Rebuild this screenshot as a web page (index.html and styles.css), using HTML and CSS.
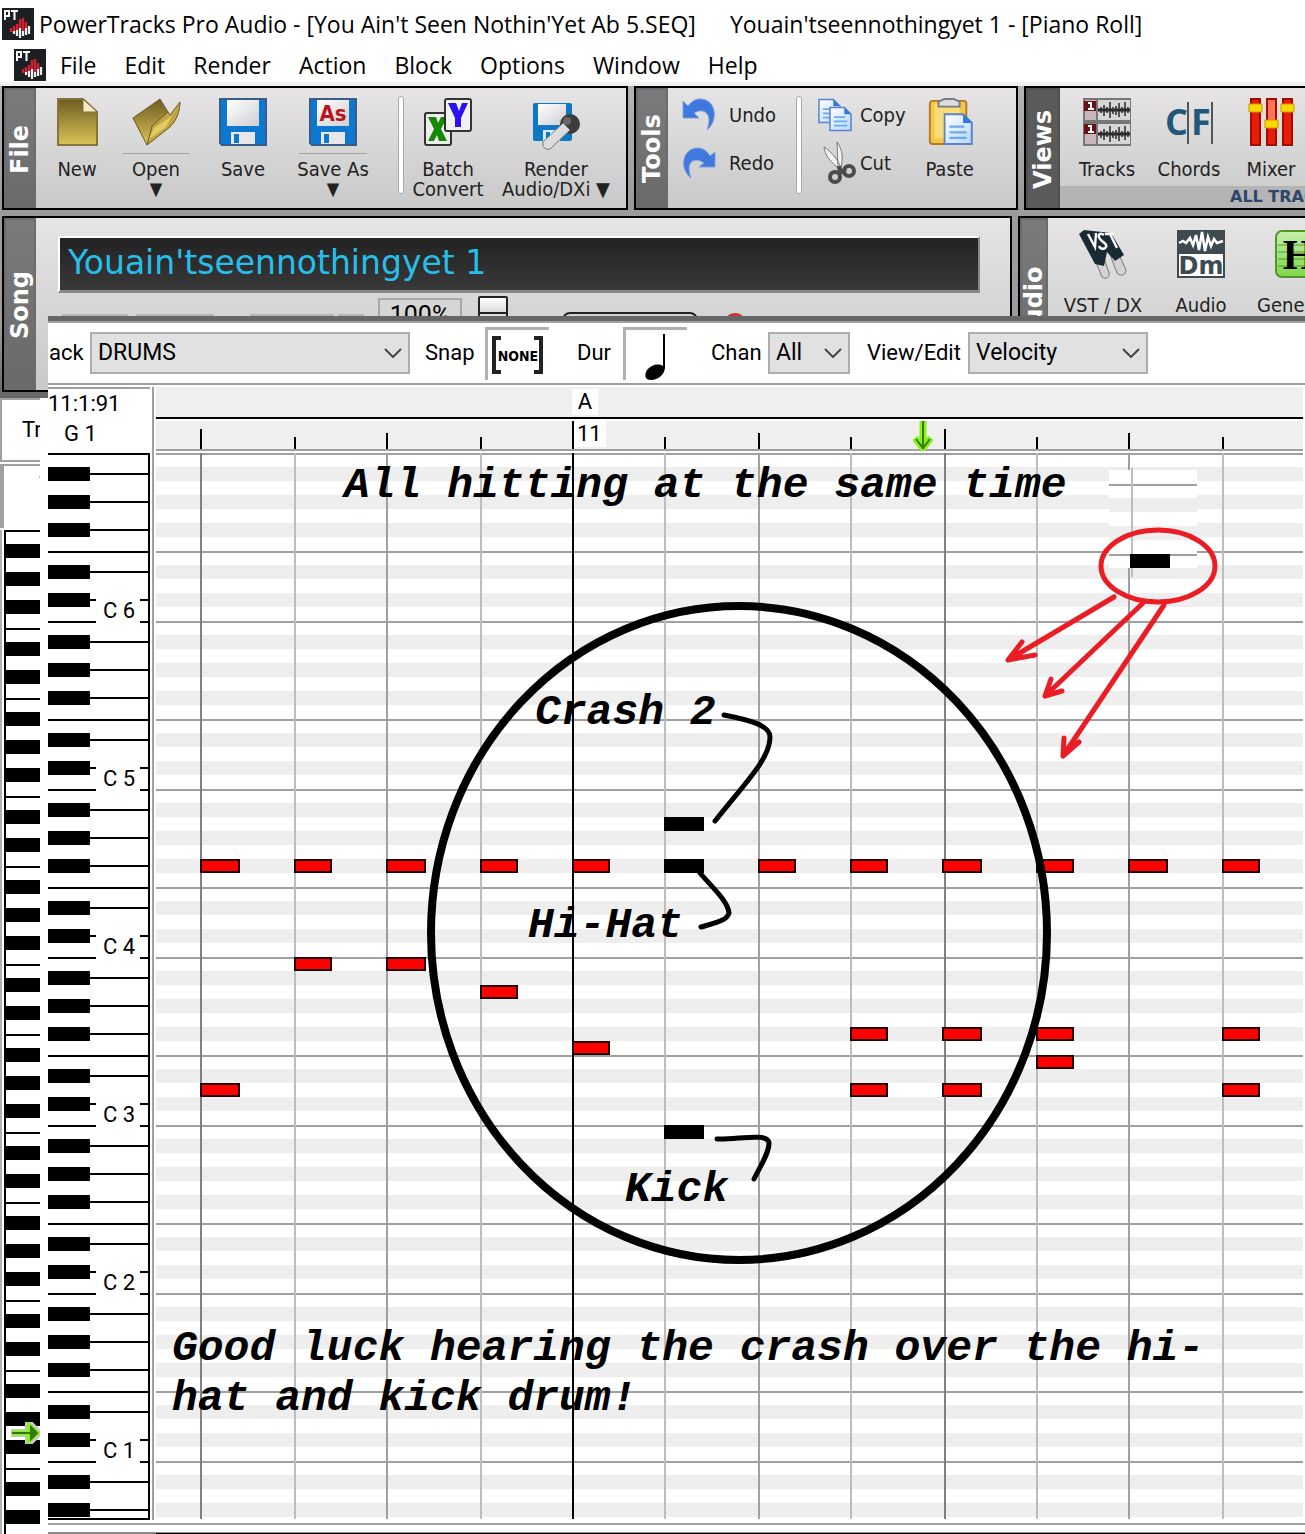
FILE: index.html
```html
<!DOCTYPE html>
<html lang="en">
<head>
<meta charset="utf-8">
<title>PowerTracks Pro Audio</title>
<link rel="stylesheet" href="styles.css">
</head>
<body>
<svg class="defs" aria-hidden="true">
  <defs>
    <linearGradient id="gold" x1="0" y1="0" x2="0" y2="1"><stop offset="0" stop-color="#6d5b20"/><stop offset="1" stop-color="#dcc558"/></linearGradient>
    <linearGradient id="paper" x1="0" y1="0" x2="1" y2="1"><stop offset="0" stop-color="#fff"/><stop offset="1" stop-color="#cfcfd2"/></linearGradient>
    <linearGradient id="sheet" x1="0" y1="0" x2="1" y2="1"><stop offset="0" stop-color="#fff"/><stop offset="1" stop-color="#b5d7ff"/></linearGradient>
    <linearGradient id="green" x1="0" y1="0" x2="0" y2="1"><stop offset="0" stop-color="#c5efab"/><stop offset="1" stop-color="#7ed64a"/></linearGradient>
    <symbol id="logo" viewBox="0 0 32 32">
      <rect width="32" height="32" fill="#1d2023"/>
      <path d="M3 12V3h4v5H3M9 3h7M12.500 3v9" fill="none" stroke="#fff" stroke-width="2"/>
      <path d="M9 20v4M12 18v6M15 16v8M18 11v12M21 10v13M24 14v9M27 18v4" stroke="#d3202e" stroke-width="2.400"/>
      <path d="M12 23v3M15 22v6M18 20v10M21 23v5M24 20v7M27 18v8" stroke="#eee" stroke-width="2.200"/>
    </symbol>
    <symbol id="disk" viewBox="0 0 48 48">
      <path d="M1 1h46v46H3l-2-2z" fill="#0d78cf" stroke="#3a5c86" stroke-width="2"/>
      <path d="M8 2h32v26H8z" fill="url(#paper)"/>
      <path d="M12 34h24v12H12z" fill="#e8e8ea"/>
      <path d="M15 36h5v9h-5z" fill="#0d78cf"/>
    </symbol>
    <symbol id="page" viewBox="0 0 24 26">
      <path d="M1 1h15l7 7v17H1z" fill="url(#sheet)" stroke="#5c83c9" stroke-width="1.600"/>
      <path d="M16 1v7h7z" fill="#2f78d8"/>
      <path d="M5 11h12M5 15.500h14M5 20h14" stroke="#6eaaf0" stroke-width="1.800"/>
    </symbol>
  </defs>
</svg>

<header class="titlebar">
  <svg class="logo"><use href="#logo"/></svg>
  <span class="app-title">PowerTracks Pro Audio - [You Ain't Seen Nothin'Yet Ab 5.SEQ]</span>
  <span class="doc-title">Youain'tseennothingyet 1 - [Piano Roll]</span>
</header>

<nav class="menubar">
  <svg class="logo"><use href="#logo"/></svg>
  <a href="#file">File</a><a href="#edit">Edit</a><a href="#render">Render</a><a href="#action">Action</a><a href="#block">Block</a><a href="#options">Options</a><a href="#window">Window</a><a href="#help">Help</a>
</nav>

<div class="toolbar">
  <section class="panel file-panel">
    <h2 class="tab">File</h2>
    <div class="tools">
      <button class="tool new"><svg class="icon" viewBox="0 0 48 48"><path d="M5 1h25l14 13v33H5z" fill="url(#gold)" stroke="#857340" stroke-width="2"/><path d="M30 1v13h14z" fill="#f4edc4" stroke="#857340"/></svg><span>New</span></button>
      <button class="tool open"><svg class="icon" viewBox="0 0 48 48"><path d="M1 20 28 1l8 13-21 33z" fill="url(#gold)" stroke="#6b5a27"/><path d="M15 47 20 28 36 14l2 3 10-13c0 10-4 19-10 25z" fill="#bfa544" stroke="#6b5a27"/><path d="M17 41 22 30 40 18 34 29z" fill="#e2cb63"/></svg><span class="ruled">Open</span><i>▼</i></button>
      <button class="tool save"><svg class="icon"><use href="#disk"/></svg><span>Save</span></button>
      <button class="tool save-as"><svg class="icon" viewBox="0 0 48 48"><use href="#disk"/><text x="24" y="23" class="as">As</text></svg><span class="ruled">Save As</span><i>▼</i></button>
      <hr>
      <button class="tool batch"><svg class="icon" viewBox="0 0 48 48"><rect x="1" y="15" width="26" height="32" rx="2" fill="#eee" stroke="#333" stroke-width="2"/><path d="M4 19h8l2 6 3-6h6l-6 12 6 12h-8l-2-6-3 6H4l6-12z" fill="#148a08"/><rect x="21" y="1" width="26" height="32" rx="2" fill="#f2f2f2" stroke="#333" stroke-width="2"/><path d="M24 5h8l3 8 3-8h6l-7 15v9h-6V20z" fill="#2a12f5"/></svg><span>Batch</span><span>Convert</span></button>
      <button class="tool render"><svg class="icon" viewBox="0 0 48 48"><rect x="1" y="5" width="39" height="38" rx="2" fill="#0f78c2"/><path d="M6 6h28v21H6z" fill="url(#paper)"/><path d="M11 32h17v11H11z" fill="#d9e9f5"/><path d="M14 34h4v9h-4z" fill="#0f78c2"/><circle cx="38" cy="26" r="10" fill="#3c3c3c"/><circle cx="35" cy="23" r="4" fill="#666"/><path d="m31 25 7 7-20 19c-5 1-8-2-7-7z" fill="#ddd" stroke="#777"/></svg><span>Render</span><span>Audio/DXi ▼</span></button>
    </div>
  </section>
  <section class="panel tools-panel">
    <h2 class="tab">Tools</h2>
    <div class="tools">
      <div class="pair">
        <button class="mini"><svg viewBox="0 0 34 34"><path d="M1 3v17h16l-5-5c8-5 15-1 15 7 0 4-1 7-2 10C37 22 34 1 18 1 13 1 9 4 6 8z" fill="#3f78df" stroke="#7c9fdc"/></svg>Undo</button>
        <button class="mini"><svg viewBox="0 0 34 34"><path d="M33 6v15H17l5-4c-8-6-15-2-15 5 0 4 1 7 2 10C-3 23 0 2 16 2c5 0 9 3 12 8z" fill="#3f78df" stroke="#7c9fdc"/></svg>Redo</button>
      </div>
      <hr>
      <div class="pair edit">
        <button class="mini"><svg viewBox="0 0 34 34"><use href="#page" width="23" height="26"/><use href="#page" x="11" y="8" width="23" height="26"/></svg>Copy</button>
        <button class="mini"><svg viewBox="0 0 34 42"><path d="M15 0c6 8 6 17 4 26h-3zM2 5c9 6 14 13 18 23l-4-2C7 18 3 13 2 5z" fill="#f2f2f2" stroke="#777"/><g fill="none" stroke="#4b4b4b" stroke-width="4"><circle cx="13" cy="35" r="5"/><circle cx="27" cy="29" r="5"/><path d="m17 24 1 7 6-4"/></g></svg>Cut</button>
      </div>
      <button class="tool paste"><svg class="icon" viewBox="0 0 48 50"><rect x="3" y="3" width="38" height="45" rx="3" fill="#f3c84a" stroke="#b47b1e" stroke-width="2"/><path d="M8 6h26v36H8z" fill="#f9dc78"/><path d="M12 9V4l6-3h10l6 3v5z" fill="#ddd" stroke="#767b87" stroke-width="2"/><use href="#page" x="17" y="15" width="31" height="35"/></svg><span>Paste</span></button>
    </div>
  </section>
  <section class="panel views-panel">
    <h2 class="tab dark">Views</h2>
    <div class="views">
      <div class="tools">
        <button class="tool"><svg class="icon" viewBox="0 0 48 48"><rect width="48" height="48" fill="#777"/><path d="M2 2h11v20H2zM2 26h11v20H2z" fill="#c9b5b7"/><path d="M1 3h12v10H1zM1 26h12v10H1z" fill="#681218"/><path d="M5 5h3v6M5 11h6M5 28h3v6M5 34h6" fill="none" stroke="#fff" stroke-width="2"/><path d="M15 2h32v20H15zM15 26h32v20H15z" fill="#d6d6d6"/><path d="M15 12h32M15 36h32" stroke="#222" stroke-width="3"/><path d="M18 9v6M21 7v11M24 9v6M27 4v16M30 9v7M33 8v9M36 5v14M39 9v6M42 4v14M45 9v6M18 33v7M21 31v11M24 33v6M27 28v16M30 33v7M33 32v9M36 29v14M39 33v6M42 28v14M45 33v6" stroke="#333" stroke-width="1.600"/></svg><span>Tracks</span></button>
        <button class="tool"><svg class="icon" viewBox="0 0 48 48"><text x="0" y="37" class="chord">C</text><text x="26" y="37" class="chord">F</text><path d="M23 4v42M47 4v42" stroke="#555" stroke-width="2"/></svg><span>Chords</span></button>
        <button class="tool"><svg class="icon" viewBox="0 0 48 48"><path d="M4 1h9v46H4zM20 1h9v46h-9zM36 1h9v46h-9z" fill="#e91c05" stroke="#a30c00" stroke-width="2"/><path d="M21 2h7v20h-7z" fill="#ff7358"/><path d="M2 6h13v8H2zM18 22h13v8H18zM34 6h13v8H34z" fill="#ffd800" stroke="#ca9600"/></svg><span>Mixer</span></button>
      </div>
      <p class="all-tracks">ALL TRACKS</p>
    </div>
  </section>
</div>

<main class="desk">
  <div class="behind">
    <div class="toolbar second">
      <section class="panel song-panel">
        <h2 class="tab">Song</h2>
        <div class="song">
          <input class="song-title" aria-label="Song title" value="Youain'tseennothingyet 1">
          <div class="transport">
            <b></b><b class="w78"></b><b class="w84"></b><b class="w26"></b>
            <output>100%</output>
            <button class="step" aria-label="Decrease tempo"></button>
            <span class="pill"></span><span class="rec"></span>
          </div>
        </div>
      </section>
      <section class="panel audio-panel">
        <h2 class="tab">Audio</h2>
        <div class="tools">
          <button class="tool"><svg class="icon" viewBox="0 0 48 48"><path d="m16 30 7 17c4 3 8 0 7-4l-6-18zM30 22l8 21c4 4 9 2 9-3l-9-20z" fill="#d5d2d5" stroke="#777"/><path d="M0 4 5 0l27 3 13 22-9 6-8-9-3 14-9-2z" fill="#182b34"/><path d="m9 4 7 13L17 3M25 5c-4-3-7 0-4 4s8 5 6 8-6 2-7-1M26 4h9m-4 0 7 14" fill="none" stroke="#fff" stroke-width="2.400"/></svg><span>VST / DX</span></button>
          <button class="tool"><svg class="icon" viewBox="0 0 48 48"><rect width="48" height="48" fill="#3d4a50"/><path d="m2 13 4-2 3 2 4-5 3 7 3-10 3 15L25 2l3 19 3-14 3 9 3-7 3 4 6-2" fill="none" stroke="#fff" stroke-width="2.500"/><path d="M2 24h44v22H2z" fill="#fff"/><text x="24" y="44" class="dm">Dm</text></svg><span>Audio</span></button>
          <button class="tool"><svg class="icon" viewBox="0 0 48 48"><rect x="1" y="1" width="46" height="46" rx="6" fill="url(#green)" stroke="#54942f" stroke-width="2"/><path d="M3 15h42M3 22h42M3 29h42M3 36h42" stroke="#4c9c22"/><text x="24" y="39" class="gen">H</text></svg><span>Generate</span></button>
        </div>
      </section>
    </div>
    <aside class="tracks">
      <div class="tracks-head">Tr</div>
      <div class="tracks-body">.</div>
      <div class="mini-keys"><svg class="key-arrow" viewBox="0 0 30 22"><path d="M1 11h27M19 2l9 9-9 9z" fill="#8af01c" stroke="#c8c8c8" stroke-width="8"/><path d="M2 11h24M19 4l8 7-8 7z" fill="#8af01c" stroke="#8af01c" stroke-width="5"/><path d="M2 11h22M21 5l6 6-6 6z" fill="#347900" stroke="#347900" stroke-width="2"/></svg></div>
    </aside>
  </div>

  <section class="piano-roll">
    <form class="roll-bar">
      <label for="track" class="track-label">ack</label>
      <span class="pick track"><select id="track"><option>DRUMS</option></select><svg viewBox="0 0 18 10"><path d="m1 1 8 8 8-8"/></svg></span>
      <label for="snap" class="snap-label">Snap</label>
      <button type="button" id="snap" class="well" aria-label="Snap none"><svg viewBox="0 0 60 50"><path d="M13 8H6v34h7M46 8h7v34h-7" fill="none" stroke="#222" stroke-width="4"/><text x="30" y="31" class="none">NONE</text></svg></button>
      <label for="dur" class="dur-label">Dur</label>
      <button type="button" id="dur" class="well" aria-label="Quarter note"><svg viewBox="0 0 60 50"><path d="M37 4h2v34c-1 8-8 12-14 12-6 0-7-5-4-10 4-5 11-7 16-4z"/></svg></button>
      <label for="chan" class="chan-label">Chan</label>
      <span class="pick chan"><select id="chan"><option>All</option></select><svg viewBox="0 0 18 10"><path d="m1 1 8 8 8-8"/></svg></span>
      <label for="view" class="view-label">View/Edit</label>
      <span class="pick view"><select id="view"><option>Velocity</option></select><svg viewBox="0 0 18 10"><path d="m1 1 8 8 8-8"/></svg></span>
    </form>
    <div class="roll">
      <div class="position"><span>11:1:91</span><span class="pitch">G 1</span></div>
      <div class="keyboard"><span>C 6</span><span>C 5</span><span>C 4</span><span>C 3</span><span>C 2</span><span>C 1</span></div>
      <div class="ruler">
        <div class="markers"><span>A</span></div>
        <div class="bars">
          <svg width="1149" height="34"><path d="M45 8v20M789 8v20M231 12v16M603 12v16M973 12v16M139 16v12M325 16v12M509 16v12M695 16v12M881 16v12M1067 16v12M417-2v30" stroke="#000" stroke-width="2"/></svg>
          <span class="bar-no">11</span>
          <svg class="playhead" viewBox="0 0 20 30"><path d="M10 0v22M2 17l8 10 8-10" fill="none" stroke="#8af01c" stroke-width="7"/><path d="M10 0v28M3 18l7 9 7-9" fill="none" stroke="#357d00" stroke-width="2"/></svg>
        </div>
      </div>
      <div class="grid">
        <svg class="notes" width="1149" height="1066" viewBox="156 453 1149 1066">
          <g fill="none" stroke-width="2">
            <path d="M295 453v1066M481 453v1066M665 453v1066M851 453v1066M1037 453v1066M1223 453v1066" stroke="#bdbdbd"/>
            <path d="M387 453v1066M759 453v1066M1129 453v1066" stroke="#a0a0a0"/>
            <path d="M201 453v1066M945 453v1066" stroke="#808080"/>
            <path d="M573 453v1066" stroke="#000"/>
          </g>
          <g fill="#f00" stroke="#200" stroke-width="2">
            <path d="M201 860h38v12h-38zM295 860h36v12h-36zM387 860h38v12h-38zM481 860h36v12h-36zM573 860h36v12h-36zM759 860h36v12h-36zM851 860h36v12h-36zM943 860h38v12h-38zM1037 860h36v12h-36zM1129 860h38v12h-38zM1223 860h36v12h-36z"/>
            <path d="M295 958h36v12h-36zM387 958h38v12h-38zM481 986h36v12h-36zM573 1042h36v12h-36z"/>
            <path d="M851 1028h36v12h-36zM943 1028h38v12h-38zM1037 1028h36v12h-36zM1223 1028h36v12h-36zM1037 1056h36v12h-36z"/>
            <path d="M201 1084h38v12h-38zM851 1084h36v12h-36zM943 1084h38v12h-38zM1223 1084h36v12h-36z"/>
          </g>
          <path d="M1109 470h88v98h-88z" fill="#fff"/>
          <path d="M1109 498h88v14h-88zM1109 526h88v14h-88z" fill="#eee"/>
          <path d="M1109 485h88M1109 555h88" stroke="#a0a0a0" stroke-width="2"/>
          <path d="M1132 468v109" stroke="#bdbdbd" stroke-width="2"/>
          <path d="M664 817h40v14h-40zM664 859h40v14h-40zM664 1125h40v14h-40zM1130 554h40v14h-40z"/>
          <g fill="none" stroke="#000" stroke-linecap="round" stroke-linejoin="round">
            <ellipse cx="739" cy="933" rx="308" ry="327" stroke-width="8"/>
            <path d="M724 715c25 5 46 10 46 22 0 22-25 46-55 84M700 873c11 13 28 28 29 40-2 8-15 10-28 14M717 1139c20 1 51-7 52 4 0 10-8 22-15 36" stroke-width="5"/>
          </g>
          <g fill="none" stroke="#ea1c24" stroke-width="5" stroke-linecap="round" stroke-linejoin="round">
            <ellipse cx="1158" cy="566" rx="57" ry="36"/>
            <path d="M1114 597 1008 660M1022 642l-14 18 27-5M1143 603l-98 93M1051 679l-6 17 17-5M1164 605l-101 151M1064 738l-1 18 16-14"/>
          </g>
        </svg>
        <p class="note-text all">All hitting at the same time</p>
        <p class="note-text crash">Crash 2</p>
        <p class="note-text hat">Hi-Hat</p>
        <p class="note-text kick">Kick</p>
        <p class="note-text luck">Good luck hearing the crash over the hi-<br>hat and kick drum!</p>
      </div>
    </div>
    <footer class="roll-foot"></footer>
  </section>
</main>
</body>
</html>
```

FILE: styles.css
```css
* { box-sizing: border-box; }
body {
  margin: 0;
  min-height: 100vh;
  overflow-x: hidden;
  background: #fff;
  color: #000;
  font-family: "Open Sans", "Noto Sans", sans-serif;
}
h2, p { margin: 0; }
button { padding: 0; border: 0; background: none; color: inherit; font: inherit; }
svg { display: block; flex: none; }
.defs { position: absolute; width: 0; height: 0; }

/* Title and menus */
.titlebar { display: flex; align-items: center; height: 46px; padding: 2px 2px 0; font-size: 23px; white-space: nowrap; }
.logo { width: 32px; height: 32px; }
.app-title { margin-left: 5px; }
.doc-title { margin-left: 34px; }
.menubar { display: flex; align-items: center; gap: 28px; height: 40px; padding: 2px 14px 0; border-bottom: 4px solid #f0f0f0; font-size: 23px; }
.menubar .logo { margin-right: -14px; }
.menubar a { color: #000; text-decoration: none; }

/* Tool panels */
.toolbar { display: flex; gap: 6px; height: 124px; padding-left: 2px; background: linear-gradient(#b4b4b4, #999); color: #222; font-family: "DejaVu Sans Condensed", "DejaVu Sans", sans-serif; font-size: 20px; line-height: 20px; }
.panel { display: flex; flex: none; border: 2px solid #000; background: linear-gradient(#e6e4e5, #c9c9c9); overflow: hidden; }
.tab { display: flex; align-items: center; justify-content: center; flex: none; width: 32px; border: 2px solid #6c6c6e; border-top: 0; background: linear-gradient(#696969, #7b7b7d); color: #fff; font: bold 24px/28px "DejaVu Sans", sans-serif; writing-mode: vertical-rl; transform: rotate(180deg); }
.tab.dark { width: 34px; background: #5a5a5a; border-color: #505050; }
.tools { display: flex; flex: 1; padding-top: 10px; }
.tool { display: flex; flex-direction: column; align-items: center; flex: none; width: 82px; white-space: nowrap; }
.tool .icon { width: 48px; height: 48px; margin-bottom: 13px; overflow: visible; }
.tool i { font-style: normal; font-size: 18px; }
.tool .ruled { position: relative; }
.ruled::before { content: ""; position: absolute; top: -6px; left: 50%; width: 68px; margin-left: -34px; border-top: 1px solid #a5a5a8; }
.file-panel { width: 626px; }
.open { width: 76px; }
.save { width: 98px; }
.save-as { width: 82px; }
.batch { width: 88px; }
.render { width: 128px; }
.toolbar hr { flex: none; width: 6px; height: 98px; margin: -2px 0 0 24px; border: 1px solid #aaa; border-radius: 3px; background: #fff; }
.as { font: bold 22px "DejaVu Sans Condensed", sans-serif; fill: #b81420; text-anchor: middle; }

.tools-panel { width: 384px; }
.pair { display: flex; flex-direction: column; gap: 14px; padding-left: 14px; }
.mini { display: flex; align-items: center; gap: 13px; height: 34px; }
.mini svg { width: 34px; height: 34px; }
.tools-panel hr { margin-left: 20px; }
.edit { padding-left: 16px; }
.edit .mini { gap: 8px; }
.edit .mini + .mini svg { height: 42px; margin-left: 4px; }
.edit .mini + .mini { gap: 4px; }
.paste { width: 88px; }

.views-panel, .audio-panel { flex: 1; min-width: 0; border-right: 0; }
.views { display: flex; flex: 1; flex-direction: column; min-width: 0; padding-left: 6px; }
.all-tracks { margin-left: -6px; padding-left: 170px; background: #b4b4b4; color: #2d4669; font: bold 16px/22px "DejaVu Sans", sans-serif; white-space: nowrap; }
.chord { font: bold 36px "Liberation Sans Narrow", "Open Sans", sans-serif; fill: #1f5878; }

/* Song bar and audio panel, partly covered by the roll window */
.desk { display: grid; grid-template-columns: 48px minmax(0, 1fr); grid-template-rows: 106px auto; }
.behind { grid-area: 1 / 1 / 3 / 3; display: flex; flex-direction: column; min-width: 0; }
.second { flex: none; height: 188px; padding-top: 6px; padding-bottom: 6px; background: linear-gradient(#9c9c9c 60%, #666); }
.song-panel { width: 1010px; }
.song { flex: 1; padding: 18px 30px 0 22px; }
.song-title { display: block; width: 100%; height: 57px; padding: 0 8px 4px; border: 2px solid #888; border-top-color: #fff; border-left-color: #fff; border-bottom-width: 3px; background: linear-gradient(#222, #393939); color: #27bfe9; font: 33px "DejaVu Sans", sans-serif; }
.transport { display: flex; align-items: flex-start; padding: 3px 0 0 4px; }
.transport b { width: 66px; height: 4px; margin: 18px 8px 0 0; background: #b4b4b4; }
.transport .w78 { width: 78px; margin-right: 36px; }
.transport .w84 { width: 84px; margin-right: 4px; }
.transport .w26 { width: 26px; margin-right: 14px; }
.transport output { width: 84px; height: 34px; margin-top: 2px; border: 2px solid #a8a8a8; color: #000; font: 25px/32px Roboto, sans-serif; text-align: center; }
.step { width: 30px; height: 30px; margin-left: 16px; border: 2px solid #222; border-radius: 2px; background: linear-gradient(#fff, #ddd 14px, #222 14px, #222 16px, #ddd 16px); }
.pill { width: 136px; height: 16px; margin: 16px 0 0 54px; border: 2px solid #222; border-radius: 8px; }
.rec { width: 22px; height: 22px; margin: 17px 0 0 26px; border-radius: 50%; background: #c33; }
.audio-panel .tab { width: 28px; }
.audio-panel .tools { padding: 12px 0 0 6px; }
.audio-panel .tool { width: 98px; }
.audio-panel .icon { margin-bottom: 17px; }
.dm { font: bold 24px "DejaVu Sans", sans-serif; fill: #3d4a50; text-anchor: middle; }
.gen { font: bold 42px "Liberation Serif", serif; text-anchor: middle; }

/* Covered tracks window on the left */
.tracks { display: flex; flex: 1; flex-direction: column; width: 40px; overflow: hidden; font: 22px/26px Roboto, sans-serif; }
.tracks-head { flex: none; height: 64px; padding: 17px 0 0 20px; border: 2px solid #a0a0a0; border-right: 0; }
.tracks-body { flex: none; height: 64px; margin-top: 2px; padding-left: 34px; border-top: 2px solid #a0a0a0; border-left: 4px solid #a0a0a0; line-height: 10px; }
.mini-keys {
  position: relative; flex: 1; margin: 2px 0 0; margin-left: 4px; border-top: 2px solid #000; border-left: 2px solid #000; box-shadow: -2px 0 #fff, -4px 0 #b0b0b0;
  background: linear-gradient(#fff 12px, #000 12px 26px, #fff 26px 40px, #000 40px 54px, #fff 54px 68px, #000 68px 82px, #fff 82px 96px, #000 96px 98px, #fff 98px 110px, #000 110px 124px, #fff 124px 138px, #000 138px 152px, #fff 152px 166px, #000 166px) 0 0 / 100% 168px;
}
.key-arrow { position: absolute; left: 4px; top: 890px; width: 30px; height: 22px; }

/* Piano roll window */
.piano-roll { position: relative; z-index: 1; grid-area: 2 / 2; min-width: 0; border-top: 5px solid #666; background: #fff; font: 22px/26px Roboto, sans-serif; box-shadow: inset 0 2px #a0a0a0; }
.roll-bar { display: flex; align-items: center; height: 64px; padding-top: 2px; border-bottom: 2px solid #a0a0a0; white-space: nowrap; }
.track-label { width: 42px; padding-left: 1px; }
.pick { display: grid; grid-template-columns: 1fr 18px 8px; align-items: center; height: 42px; }
.pick select { grid-area: 1 / 1 / 2 / 4; width: 100%; height: 42px; padding: 0 6px; appearance: none; border: 2px solid #adadad; border-radius: 0; background: #e1e1e1; color: #000; font: inherit; font-size: 23px; }
.pick svg { grid-area: 1 / 2; width: 18px; height: 10px; fill: none; stroke: #444; stroke-width: 2; pointer-events: none; }
.track { width: 320px; }
.chan { width: 82px; }
.view { width: 180px; }
.snap-label { width: 75px; padding-left: 15px; }
.dur-label { width: 74px; padding-left: 28px; }
.chan-label { width: 81px; padding-left: 24px; }
.view-label { width: 118px; padding-left: 17px; }
.well { width: 64px; height: 53px; border-top: 3px solid #b0b0b0; border-left: 3px solid #b0b0b0; }
.well svg { width: 60px; height: 50px; }
.none { font: bold 14px "DejaVu Sans Condensed", sans-serif; text-anchor: middle; }

.roll { display: grid; grid-template-columns: 102px minmax(0, 1fr); column-gap: 6px; padding: 2px 2px 0 0; background: linear-gradient(#a0a0a0, #a0a0a0) 104px 2px / 2px 100% no-repeat; }
.position { display: flex; flex-direction: column; height: 66px; border-top: 2px solid #a0a0a0; line-height: 30px; }
.pitch { padding-left: 16px; }
.keyboard {
  display: flex; flex-direction: column; align-items: flex-start; gap: 138px; padding: 141px 0 0 48px; border: 2px solid #000; border-left: 0;
  background:
    linear-gradient(#fff0 14px, #000 14px 28px, #fff0 28px 42px, #000 42px 56px, #fff0 56px 70px, #000 70px 84px, #fff0 84px 112px, #000 112px 126px, #fff0 126px 140px, #000 140px 154px, #fff0 154px) 0 -2px / 42px 168px repeat-y,
    linear-gradient(#000 2px, #fff 2px 20px, #000 20px 22px, #fff 22px 48px, #000 48px 50px, #fff 50px 76px, #000 76px 78px, #fff 78px 98px, #000 98px 100px, #fff 100px 118px, #000 118px 120px, #fff 120px 146px, #000 146px 148px, #fff 148px) 0 -2px / 100% 168px;
}
.keyboard span { width: 44px; height: 30px; padding-left: 7px; background: #fff; line-height: 30px; }
.ruler { grid-area: 1 / 2; overflow: hidden; }
.markers { height: 32px; padding: 2px 0 0 416px; border-bottom: 2px solid #000; background: #efefef; }
.markers span { display: block; width: 26px; height: 26px; background: #fff; text-align: center; }
.bars { position: relative; height: 34px; border-top: 2px solid #fff; background: linear-gradient(#efefef 28px, #a0a0a0 28px 30px, #fff 30px); }
.bar-no { position: absolute; left: 418px; top: 0; width: 32px; height: 26px; padding-left: 3px; background: #fff; }
.playhead { position: absolute; left: 757px; top: 0; width: 20px; height: 30px; }
.grid {
  position: relative; grid-area: 2 / 2; overflow: hidden; border-bottom: 1px solid #fff;
  background: linear-gradient(#a0a0a0 2px, #fff 2px 14px, #eee 14px 28px, #fff 28px 42px, #eee 42px 56px, #fff 56px 70px, #eee 70px 84px, #fff 84px 98px, #a0a0a0 98px 100px, #fff 100px 112px, #eee 112px 126px, #fff 126px 140px, #eee 140px 154px, #fff 154px) 0 0 / 100% 168px;
}
.note-text { position: absolute; margin: 0; font: italic bold 43px/50px "Courier New", "Liberation Mono", monospace; white-space: nowrap; }
.all { left: 188px; top: 8px; }
.crash { left: 379px; top: 235px; }
.hat { left: 372px; top: 448px; }
.kick { left: 469px; top: 712px; }
.luck { left: 16px; top: 871px; }
.roll-foot { height: 15px; background: linear-gradient(#000, #000) 108px 13px / 100% 2px no-repeat, linear-gradient(#fff 3px, #a0a0a0 3px 5px, #fff 5px 12px, #888 12px); }
```
